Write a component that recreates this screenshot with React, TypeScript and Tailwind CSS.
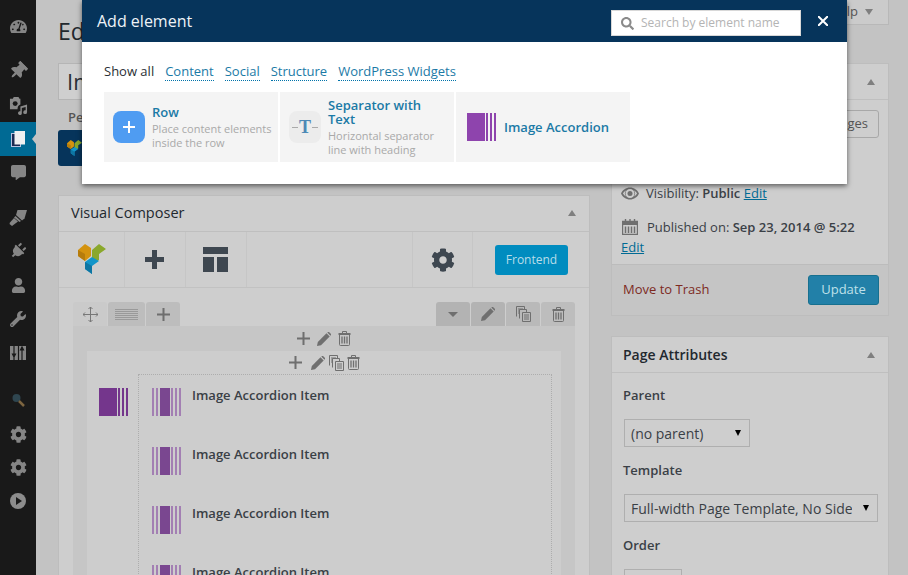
import React from "react";
import {
  FaTachometerAlt, FaThumbtack, FaCommentAlt, FaPlug, FaUser, FaWrench, FaCog, FaSearch,
} from "react-icons/fa";

const Bars = ({ className = "", mode = "main" }: { className?: string; mode?: "main" | "item" }) =>
  mode === "main" ? (
    <svg viewBox="0 0 29 28" className={className} fill="currentColor">
      <rect x="0" y="0" width="18" height="28" />
      <rect x="19" y="0" width="2" height="28" />
      <rect x="23" y="0" width="2" height="28" />
      <rect x="27" y="0" width="2" height="28" />
    </svg>
  ) : (
    <svg viewBox="0 0 29 28" className={className}>
      <g fill="#a37fb3">
        <rect x="0" y="0" width="2" height="28" />
        <rect x="4" y="0" width="2" height="28" />
        <rect x="19" y="0" width="2" height="28" />
        <rect x="23" y="0" width="2" height="28" />
        <rect x="27" y="0" width="2" height="28" />
      </g>
      <rect x="8" y="0" width="10" height="28" fill="#7a4790" />
    </svg>
  );

const VcLogo = ({ className = "" }: { className?: string }) => (
  <svg viewBox="0 0 28 30" className={className}>
    <path d="M0 6 7 0 13 4 13 12 7 17 0 12Z" fill="#d4930f" />
    <path d="M0 6 7 10 7 17 0 12Z" fill="#b67c0c" />
    <path d="M14 6 21 0 28 5 21 10 21 16 14 20Z" fill="#8aa82c" />
    <path d="M7 18 14 13 21 17 14 22 14 30 7 25Z" fill="#1295c9" />
    <path d="M7 18 14 22 14 30 7 25Z" fill="#0e76a3" />
  </svg>
);

const Trash = ({ className = "" }: { className?: string }) => (
  <svg viewBox="0 0 13 15" className={className} fill="none" stroke="#6f6f6f" strokeWidth="1">
    <path d="M.5 3.500h12M.5 2.500h12M4.500 2V.5h4V2M1.500 3.500V13.500a1 1 0 0 0 1 1h8a1 1 0 0 0 1-1V3.500" />
    <path d="M4 5.500V12.500M6.500 5.500V12.500M9 5.500V12.500" strokeWidth="1.300" />
  </svg>
);

const Pencil = ({ className = "" }: { className?: string }) => (
  <svg viewBox="0 0 14 14" className={className} fill="#6f6f6f">
    <path d="M0 14 .8 10 9.500 1.300 12.700 4.500 4 13.200Z" />
    <path d="M10.300.5 11 0a1 1 0 0 1 1 0L14 2a1 1 0 0 1 0 1l-.5.700Z" />
  </svg>
);

const Copy = ({ className = "" }: { className?: string }) => (
  <svg viewBox="0 0 15 16" className={className} fill="none" stroke="#6f6f6f" strokeWidth="1">
    <path d="M.5 10.500V.5h8v3" />
    <path d="M2 3h5M2 5h2M2 7h2" />
    <path d="M3.500 12.500V3.500h7v3" />
    <path d="M6.500 6.500h8v9h-8zM8 9h5M8 11h5M8 13h5" />
  </svg>
);

const Plus = ({ className = "" }: { className?: string }) => (
  <svg viewBox="0 0 13 13" className={className} fill="#6f6f6f">
    <rect x="5.500" width="2" height="13" />
    <rect y="5.500" width="13" height="2" />
  </svg>
);

const Media = () => (
  <svg viewBox="0 0 20 20" className="w-[19px] h-[19px]" fill="#8a8a8a">
    <path d="M1 3h3l1-2h5l1 2h1v6a5 5 0 0 0-3 5H1Z" />
    <circle cx="6.500" cy="8" r="2.600" fill="#191919" />
    <path d="M12 11 19 9v8a2 2 0 1 1-1.500-1.900V11.500L13.500 12.700V18a2 2 0 1 1-1.500-1.900Z" />
  </svg>
);

const Pages = () => (
  <svg viewBox="0 0 14 16" className="w-[14px] h-[16px]">
    <path d="M0 2h10v14H0Z" fill="#b8c3e0" />
    <path d="M1 3h8v12H1Z" fill="#1b2a52" />
    <path d="M3.500 0H14v13.500H3.500Z" fill="#f0f0f0" />
  </svg>
);

const Brush = () => (
  <svg viewBox="0 0 18 17" className="w-[18px] h-[17px]" fill="#858585">
    <path d="M8.500 1 18 1 15.500 9.500 13 11.500 7 6Z" />
    <path d="M6.500 7 12 12 10.500 13 5 8.500Z" />
    <path d="M5 9 9 12.500 3 17 .5 15 1 13.500Z" />
  </svg>
);

const Sliders = () => (
  <svg viewBox="0 0 16 14" className="w-[16px] h-[14px]">
    <rect width="16" height="14" fill="#858585" />
    <path d="M4 0v9M2.500 8h3l-1.500 3ZM4 11v3M8.500 0v14M12 3v11M10.500 4l1.500-3 1.500 3Z" stroke="#191919" strokeWidth="1.200" fill="#191919" />
  </svg>
);

const SideItem = ({ children, active, h }: { children: React.ReactNode; active?: boolean; h: string }) => (
  <div className={`relative flex items-center justify-center w-[36px] ${h} ${active ? "bg-[#006a94]" : ""}`}>
    {children}
    {active && (
      <span className="absolute right-0 top-[12px] w-0 h-0 border-y-[5px] border-y-transparent border-r-[4px] border-r-[#c3c3c3]" />
    )}
  </div>
);

const Sidebar = () => (
  <aside className="w-[36px] shrink-0 bg-[#191919] flex flex-col pt-[8px] text-[#858585]">
    <SideItem h="h-[36px]"><FaTachometerAlt size={17} /></SideItem>
    <div className="h-[10px]" />
    <SideItem h="h-[34px]"><FaThumbtack size={18} className="rotate-45" /></SideItem>
    <SideItem h="h-[34px]"><Media /></SideItem>
    <SideItem active h="h-[34px]"><Pages /></SideItem>
    <SideItem h="h-[33px]"><FaCommentAlt size={15} /></SideItem>
    <div className="h-[11px]" />
    <SideItem h="h-[34px]"><Brush /></SideItem>
    <SideItem h="h-[34px]"><FaPlug size={16} className="rotate-45" /></SideItem>
    <SideItem h="h-[34px]"><FaUser size={15} /></SideItem>
    <SideItem h="h-[34px]"><FaWrench size={16} /></SideItem>
    <SideItem h="h-[34px]"><Sliders /></SideItem>
    <div className="h-[13px]" />
    <SideItem h="h-[34px]">
      <svg viewBox="0 0 16 14" className="w-[16px] h-[14px]">
        <circle cx="6.500" cy="5" r="4" fill="#2f4650" />
        <path d="M9 8l5 5" stroke="#7d6540" strokeWidth="2.500" />
      </svg>
    </SideItem>
    <SideItem h="h-[34px]"><FaCog size={17} /></SideItem>
    <SideItem h="h-[33px]"><FaCog size={17} /></SideItem>
    <SideItem h="h-[33px]">
      <span className="flex items-center justify-center w-[16px] h-[16px] rounded-full bg-[#8c8c8c]">
        <span className="ml-[2px] w-0 h-0 border-y-[4px] border-y-transparent border-l-[6px] border-l-[#191919]" />
      </span>
    </SideItem>
  </aside>
);

const Tab = ({ className, children }: { className: string; children: React.ReactNode }) => (
  <div className={`h-[24px] flex items-center justify-center rounded-t-[3px] ${className}`}>{children}</div>
);

const AccordionItem = () => (
  <div className="flex h-[59px] items-start">
    <Bars mode="item" className="w-[29px] h-[28px] shrink-0" />
    <span className="ml-[11px] -mt-[2px] text-[13px] leading-[18px] font-semibold text-[#3a4046]">Image Accordion Item</span>
  </div>
);

const Composer = () => (
  <section className="mt-[29px] border border-[#bdbdbd] bg-[#cecece] h-[400px] overflow-hidden">
    <div className="h-[36px] flex items-center justify-between border-b border-[#bfbfbf] pl-[12px] pr-[13px] pb-[2px]">
      <h2 className="text-[14.500px] text-[#22282e]">Visual Composer</h2>
      <span className="w-0 h-0 border-x-[4.500px] border-x-transparent border-b-[6px] border-b-[#7f7f7f]" />
    </div>
    <div className="h-[56px] flex items-stretch border-b border-[#c2c2c2]">
      <div className="w-[66px] flex items-center justify-center border-r border-[#c6c6c6]">
        <VcLogo className="w-[28px] h-[30px] -mt-[1px]" />
      </div>
      <div className="w-[61px] flex items-center justify-center border-r border-[#c6c6c6]">
        <svg viewBox="0 0 19 19" className="w-[19px] h-[19px] -ml-[1px]" fill="#3e4750">
          <rect x="7" width="5" height="19" />
          <rect y="7" width="19" height="5" />
        </svg>
      </div>
      <div className="w-[61px] flex items-center justify-center border-r border-[#c6c6c6]">
        <svg viewBox="0 0 25 25" className="w-[25px] h-[25px] -ml-[1px]" fill="#3e4750">
          <rect width="25" height="7" />
          <rect y="10" width="11" height="15" />
          <rect x="14" y="10" width="11" height="15" />
        </svg>
      </div>
      <div className="flex-1" />
      <div className="w-[61px] flex items-center justify-center border-x border-[#c6c6c6]">
        <FaCog size={24} color="#3e4750" />
      </div>
      <div className="w-[116px] flex items-center pl-[22px]">
        <button className="w-[73px] h-[30px] rounded-[3px] bg-[#008cbf] text-[12px] text-[#b9dde9]">Frontend</button>
      </div>
    </div>
    <div className="pt-[14px] px-[14px]">
      <div className="flex justify-between">
        <div className="flex gap-[1px]">
          <Tab className="w-[34px] bg-[#cacaca]">
            <svg viewBox="0 0 15 15" className="w-[15px] h-[15px]" fill="none" stroke="#777" strokeWidth="1">
              <path d="M7.500 0v15M0 7.500h15M5.500 2l2-2 2 2M5.500 13l2 2 2-2M2 5.500l-2 2 2 2M13 5.500l2 2-2 2" />
            </svg>
          </Tab>
          <Tab className="w-[37px] bg-[#bdbdbd]">
            <svg viewBox="0 0 23 11" className="w-[23px] h-[11px]" fill="#999">
              <rect y="0" width="23" height="1" /><rect y="2" width="23" height="1" /><rect y="4" width="23" height="1" />
              <rect y="6" width="23" height="1" /><rect y="8" width="23" height="1" /><rect y="10" width="23" height="1" />
            </svg>
          </Tab>
          <Tab className="w-[34px] bg-[#bdbdbd]"><Plus className="w-[13px] h-[13px]" /></Tab>
        </div>
        <div className="flex gap-[1px]">
          <Tab className="w-[34px] bg-[#b3b3b3]">
            <span className="w-0 h-0 border-x-[5px] border-x-transparent border-t-[5px] border-t-[#6f6f6f]" />
          </Tab>
          <Tab className="w-[34px] bg-[#b3b3b3]"><Pencil className="w-[14px] h-[14px]" /></Tab>
          <Tab className="w-[34px] bg-[#b9b9b9]"><Copy className="w-[15px] h-[16px]" /></Tab>
          <Tab className="w-[34px] bg-[#bdbdbd]"><Trash className="w-[13px] h-[15px]" /></Tab>
        </div>
      </div>
      <div className="bg-[#c6c6c6] px-[14px] pb-[14px]">
        <div className="h-[25px] flex items-center justify-center gap-[7px]">
          <Plus className="w-[13px] h-[13px]" />
          <Pencil className="w-[14px] h-[14px]" />
          <Trash className="w-[13px] h-[15px]" />
        </div>
        <div className="bg-[#cdcdcd] h-[240px]">
          <div className="h-[23px] flex items-center justify-center">
            <Plus className="w-[13px] h-[13px] mr-[9px]" />
            <Pencil className="w-[14px] h-[14px] mr-[4px]" />
            <Copy className="w-[15px] h-[16px] mr-[3px]" />
            <Trash className="w-[13px] h-[15px]" />
          </div>
          <div className="flex pl-[12px] pr-[9px]">
            <div className="w-[39px] pt-[14px] text-[#74368c]">
              <Bars className="w-[29px] h-[28px]" />
            </div>
            <div className="flex-1 border-l border-t border-r border-dotted border-[#adadad] pl-[13px] pt-[13px]">
              <AccordionItem />
              <AccordionItem />
              <AccordionItem />
              <AccordionItem />
            </div>
          </div>
        </div>
      </div>
    </div>
  </section>
);

const Field = ({ label, className, children }: { label: string; className: string; children: React.ReactNode }) => (
  <div>
    <div className="text-[13px] leading-[18px] font-semibold text-[#3a4046] -ml-[1px]">{label}</div>
    <div className={`mt-[15px] h-[28px] border border-[#afafaf] flex items-center justify-between text-[14px] text-[#3a4046] ${className}`}>
      {children}
    </div>
  </div>
);

const RightColumn = () => (
  <div className="w-[278px] shrink-0">
    <div className="flex justify-end h-[25px]">
      <div className="w-[90px] border-x border-b border-[#b8b8b8] bg-[#cbcbcb] flex items-center justify-end gap-[7px] pr-[15px] text-[13px] text-[#555]">
        Help
        <span className="w-0 h-0 border-x-[4px] border-x-transparent border-t-[6px] border-t-[#7f7f7f]" />
      </div>
    </div>
    <section className="mt-[38px] h-[253px] border border-[#bdbdbd] bg-[#cecece] flex flex-col">
      <div className="h-[36px] shrink-0 flex items-center justify-between border-b border-[#bfbfbf] pl-[11px] pr-[13px]">
        <h2 className="text-[14px] font-semibold text-[#22282e]">Publish</h2>
        <span className="w-0 h-0 border-x-[4.500px] border-x-transparent border-b-[6px] border-b-[#7f7f7f]" />
      </div>
      <div className="flex-1 pl-[9px] pr-[9px] pt-[10px]">
        <div className="flex justify-end">
          <div className="w-[124px] h-[28px] rounded-[3px] border border-[#a8a8a8] flex items-center justify-end pr-[10px] text-[13px] text-[#555] whitespace-nowrap">Preview Changes</div>
        </div>
        <div className="mt-[46px] flex items-center gap-[7px] text-[13px] leading-[18px] text-[#3a4046]">
          <svg viewBox="0 0 18 12" className="w-[18px] h-[13px]" fill="#6f6f6f">
            <path fillRule="evenodd" d="M9 0c4 0 7.500 2.500 9 6-1.500 3.500-5 6-9 6S1.500 9.500 0 6c1.500-3.500 5-6 9-6ZM9 1.500a4.500 4.500 0 1 0 0 9 4.500 4.500 0 0 0 0-9ZM2 6c.7 1.300 1.700 2.400 3 3.100A5 5 0 0 1 5 3C3.700 3.600 2.700 4.700 2 6Zm11-3a5 5 0 0 1 0 6.100c1.300-.7 2.300-1.800 3-3.100-.7-1.300-1.700-2.400-3-3Z" />
            <circle cx="9" cy="6" r="2.500" />
          </svg>
          <span>Visibility: <b className="font-semibold">Public</b> <span className="underline text-[#006a94]">Edit</span></span>
        </div>
        <div className="mt-[16px] ml-[1px] flex items-start gap-[9px] text-[13px] leading-[18px] text-[#3a4046]">
          <svg viewBox="0 0 16 16" className="w-[16px] h-[16px] mt-[1px]" fill="none" stroke="#6f6f6f">
            <path d="M.5 2.500h15v13H.5zM3.500 0v4M8 0v4M12.500 0v4" strokeWidth="1.400" />
            <path d="M.5 2.500h15v3H.5z" fill="#6f6f6f" />
            <path d="M3.500 7.500v6.500M6.500 7.500v6.500M9.500 7.500v6.500M12.500 7.500v6.500" strokeWidth="1.500" />
          </svg>
          <span className="whitespace-nowrap">Published on: <b className="font-semibold">Sep 23, 2014 @ 5:22</b></span>
        </div>
        <div className="text-[13px] leading-[18px] mt-[2px] underline text-[#006a94]">Edit</div>
      </div>
      <div className="h-[51px] shrink-0 border-t border-[#bcbcbc] bg-[#c5c5c5] flex items-center justify-between pl-[11px] pr-[9px]">
        <span className="text-[13px] text-[#7d2a1f]">Move to Trash</span>
        <button className="w-[71px] h-[30px] rounded-[3px] border border-[#17708f] bg-[#2280a8] text-[13px] text-[#bfe0ea]">Update</button>
      </div>
    </section>
    <section className="mt-[20px] h-[240px] border border-[#bdbdbd] bg-[#cecece]">
      <div className="h-[36px] flex items-center justify-between border-b border-[#bfbfbf] pl-[11px] pr-[13px]">
        <h2 className="text-[14px] font-semibold text-[#22282e]">Page Attributes</h2>
        <span className="w-0 h-0 border-x-[4.500px] border-x-transparent border-b-[6px] border-b-[#7f7f7f]" />
      </div>
      <div className="pl-[12px] pt-[13px] flex flex-col gap-[14px]">
        <Field label="Parent" className="w-[126px] pl-[6px] pr-[8px]">
          (no parent)
          <span className="w-0 h-0 border-x-[3px] border-x-transparent border-t-[6px] border-t-black" />
        </Field>
        <Field label="Template" className="w-[254px] pl-[6px] pr-[8px]">
          <span className="w-[221px] overflow-hidden whitespace-nowrap">Full-width Page Template, No Sidebar</span>
          <span className="w-0 h-0 border-x-[3px] border-x-transparent border-t-[6px] border-t-black" />
        </Field>
        <Field label="Order" className="w-[58px]">
          <span />
        </Field>
      </div>
    </section>
  </div>
);

const LeftColumn = () => (
  <div className="w-[532px] shrink-0">
    <h1 className="mt-[17px] h-[28px] text-[23px] leading-[28px] text-[#22282e]">Edit Page</h1>
    <div className="mt-[18px] h-[37px] border border-[#b5b5b5] bg-[#cfcfcf] pl-[8px] flex items-center text-[22px] text-[#2a2f35] whitespace-nowrap">Image Accordion</div>
    <div className="mt-[8px] h-[18px] pl-[10px] text-[13px] leading-[18px] font-semibold text-[#555]">Permalink:</div>
    <div className="mt-[4px] w-[200px] h-[36px] rounded-[3px] bg-[#06345b] pl-[9px] flex items-center">
      <VcLogo className="w-[15px] h-[16px]" />
    </div>
  </div>
);

const Card = ({ icon, title, desc, className }: { icon: React.ReactNode; title: string; desc?: string; className: string }) => (
  <div className={`w-[174px] h-[70px] bg-[#f4f4f4] flex items-center pr-[4px] ${className}`}>
    {icon}
    <div className="min-w-0">
      <div className="text-[13px] leading-[14px] font-semibold text-[#1b7aa6]">{title}</div>
      {desc && <div className="text-[11px] leading-[14px] mt-[3px] text-[#a9a9a9]">{desc}</div>}
    </div>
  </div>
);

const Modal = () => (
  <div className="absolute left-[82px] top-0 w-[765px] h-[184px] bg-white shadow-[0_2px_5px_rgba(0,0,0,0.55)]">
    <div className="h-[42px] bg-[#06345b] flex items-center pl-[15px] pr-[19px]">
      <h3 className="flex-1 text-[16px] text-[#eef3f7]">Add element</h3>
      <div className="mt-[4px] w-[190px] h-[26px] bg-white border border-[#d8d8d8] flex items-center pl-[9px] gap-[7px]">
        <FaSearch size={13} color="#8a8a8a" />
        <span className="text-[12px] text-[#b4b4b4] whitespace-nowrap">Search by element name</span>
      </div>
      <svg viewBox="0 0 10 10" className="ml-[17px] w-[10px] h-[10px]" stroke="#fff" strokeWidth="2">
        <path d="M0 0l10 10M10 0L0 10" />
      </svg>
    </div>
    <div className="pl-[22px] pt-[20px]">
      <div className="flex gap-[11px] text-[13px] leading-[18px]">
        <span className="text-[#2a2f35]">Show all</span>
        <span className="text-[#1b7aa6] border-b border-dotted border-[#0073aa]">Content</span>
        <span className="text-[#1b7aa6] border-b border-dotted border-[#0073aa]">Social</span>
        <span className="text-[#1b7aa6] border-b border-dotted border-[#0073aa]">Structure</span>
        <span className="text-[#1b7aa6] border-b border-dotted border-[#0073aa]">WordPress Widgets</span>
      </div>
      <div className="mt-[11px] flex gap-[2px]">
        <Card
          className="pl-[9px] gap-[7px]"
          title="Row"
          desc="Place content elements inside the row"
          icon={
            <span className="w-[32px] h-[32px] shrink-0 rounded-[8px] bg-[#4f9cf2] flex items-center justify-center">
              <svg viewBox="0 0 12 12" className="w-[12px] h-[12px]" fill="#fff">
                <rect x="5" width="2" height="12" /><rect y="5" width="12" height="2" />
              </svg>
            </span>
          }
        />
        <Card
          className="pl-[9px] gap-[7px]"
          title="Separator with Text"
          desc="Horizontal separator line with heading"
          icon={
            <span className="w-[32px] h-[32px] shrink-0 rounded-[8px] bg-[#ececec] flex items-center justify-center gap-[1px]">
              <span className="w-[6px] h-px bg-[#aaa]" />
              <span className="font-['Liberation_Serif',serif] font-bold text-[18px] leading-none text-[#4d89b6]">T</span>
              <span className="w-[6px] h-px bg-[#aaa]" />
            </span>
          }
        />
        <Card
          className="pl-[11px] gap-[8px]"
          title="Image Accordion"
          icon={<Bars className="w-[29px] h-[28px] shrink-0 text-[#8e44ad]" />}
        />
      </div>
    </div>
  </div>
);

export default function App() {
  return (
    <div className="relative w-[908px] h-[575px] overflow-hidden flex bg-[#c3c3c3] font-['Open_Sans',sans-serif]">
      <Sidebar />
      <main className="flex flex-1 gap-[21px] pl-[22px] items-start">
        <div className="w-[532px] shrink-0">
          <LeftColumn />
          <Composer />
        </div>
        <RightColumn />
      </main>
      <Modal />
    </div>
  );
}
